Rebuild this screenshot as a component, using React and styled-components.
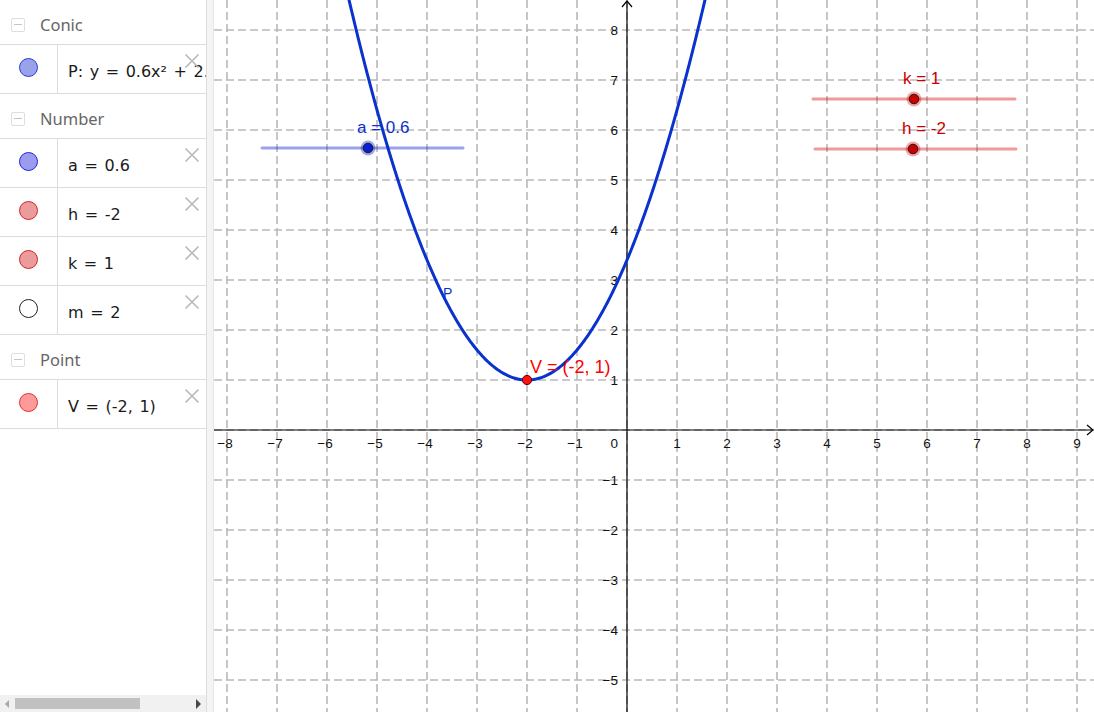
import React from 'react';
import styled, { createGlobalStyle } from 'styled-components';

const GlobalStyle = createGlobalStyle`
  html, body {
    margin: 0;
    padding: 0;
    width: 100%;
    height: 100%;
    overflow: hidden;
    background: #ffffff;
  }
  #root { height: 100%; }
`;

const Page = styled.div`
  display: flex;
  width: 1094px;
  height: 712px;
  font-family: "Noto Sans", "DejaVu Sans", sans-serif;
  background: #fff;
`;

/* ---------- Algebra view ---------- */

const AlgebraPanel = styled.aside`
  width: 206px;
  flex: none;
  border-right: 1px solid #dcdcdc;
  display: flex;
  flex-direction: column;
  background: #fff;
`;

const List = styled.div`
  flex: 1;
  overflow: hidden;
`;

const GroupHeader = styled.div`
  box-sizing: border-box;
  height: 45px;
  padding: 5px 0 0 11px;
  border-bottom: 1px solid #dcdcdc;
  display: flex;
  align-items: center;
  gap: 15px;
  color: #666;
  font-size: 16.5px;
`;

const Toggle = styled.span`
  box-sizing: border-box;
  width: 14px;
  height: 14px;
  border: 1px solid #dedede;
  border-radius: 2px;
  display: flex;
  align-items: center;
  justify-content: center;
  &::after {
    content: "";
    width: 8px;
    height: 1px;
    background: #c4c4c4;
  }
`;

const Row = styled.div`
  position: relative;
  box-sizing: border-box;
  height: 49px;
  border-bottom: 1px solid #dcdcdc;
  display: flex;
`;

const MarbleCell = styled.div`
  box-sizing: border-box;
  width: 58px;
  flex: none;
  border-right: 1px solid #dcdcdc;
  display: flex;
  justify-content: center;
  align-items: flex-start;
  padding-top: 13px;
`;

const Marble = styled.span`
  box-sizing: border-box;
  width: 19px;
  height: 19px;
  border-radius: 50%;
  background: ${p => p.$fill};
  border: 1.3px solid ${p => p.$stroke};
`;

const Formula = styled.div`
  padding: 17px 0 0 10px;
  line-height: 20px;
  font-family: "DejaVu Sans", sans-serif;
  font-size: 16px;
  word-spacing: 1.5px;
  color: #1a1a1a;
  white-space: nowrap;
  overflow: hidden;
  flex: 1;
`;

const CloseButton = styled.svg`
  position: absolute;
  top: 8px;
  right: 6px;
  width: 16px;
  height: 16px;
`;

const ScrollBar = styled.div`
  height: 17px;
  flex: none;
  background: #f1f1f1;
  display: flex;
  align-items: center;
  padding: 0 5px;
`;

const ArrowLeft = styled.span`
  width: 0;
  height: 0;
  border-top: 4px solid transparent;
  border-bottom: 4px solid transparent;
  border-right: 4px solid #a8a8a8;
  margin-right: 6px;
`;

const ArrowRight = styled.span`
  width: 0;
  height: 0;
  border-top: 5px solid transparent;
  border-bottom: 5px solid transparent;
  border-left: 5px solid #4a4a4a;
`;

const Thumb = styled.span`
  width: 125px;
  height: 11px;
  background: #c1c1c1;
`;

const Track = styled.span`
  flex: 1;
`;

const Splitter = styled.div`
  width: 6px;
  flex: none;
  background: #f4f4f4;
  border-right: 1px solid #e6e6e6;
`;

/* ---------- Graphics view ---------- */

const GraphView = styled.div`
  flex: 1;
  position: relative;
  overflow: hidden;
  background: #fff;
`;

const Canvas = styled.svg`
  display: block;
`;

const AxisLabel = styled.text`
  font-family: "Liberation Sans", Arial, sans-serif;
  font-size: 13.5px;
  fill: #111;
`;

const ObjectLabel = styled.text`
  font-family: "Liberation Sans", Arial, sans-serif;
  font-size: ${p => p.$size || 17}px;
  fill: ${p => p.$color};
`;

const W = 880;
const H = 712;
const OX = 413;
const OY = 430;
const S = 50;
const px = x => OX + S * x;
const py = y => OY - S * y;

const MINUS = '\u2212';

const groups = [
  {
    title: 'Conic',
    items: [{ text: 'P: y = 0.6x² + 2.4x + 3.4', fill: '#9aa3ea', stroke: '#2a3ad8' }],
  },
  {
    title: 'Number',
    items: [
      { text: 'a = 0.6', fill: '#9c9cee', stroke: '#2222e0' },
      { text: 'h = -2', fill: '#eb9b9b', stroke: '#d42424' },
      { text: 'k = 1', fill: '#eb9b9b', stroke: '#d42424' },
      { text: 'm = 2', fill: '#ffffff', stroke: '#222222' },
    ],
  },
  {
    title: 'Point',
    items: [{ text: 'V = (-2, 1)', fill: '#ff9a9a', stroke: '#e03030' }],
  },
];

function CloseIcon() {
  return (
    <CloseButton viewBox="0 0 16 16">
      <path d="M1.5 1.5 L14.5 14.5 M14.5 1.5 L1.5 14.5" stroke="#b8b8b8" strokeWidth="1.6" fill="none" />
    </CloseButton>
  );
}

function Algebra() {
  return (
    <AlgebraPanel>
      <List>
        {groups.map(g => (
          <React.Fragment key={g.title}>
            <GroupHeader>
              <Toggle />
              {g.title}
            </GroupHeader>
            {g.items.map(it => (
              <Row key={it.text}>
                <MarbleCell>
                  <Marble $fill={it.fill} $stroke={it.stroke} />
                </MarbleCell>
                <Formula>{it.text}</Formula>
                <CloseIcon />
              </Row>
            ))}
          </React.Fragment>
        ))}
      </List>
      <ScrollBar>
        <ArrowLeft />
        <Thumb />
        <Track />
        <ArrowRight />
      </ScrollBar>
    </AlgebraPanel>
  );
}

function parabolaPath() {
  const pts = [];
  for (let x = -5.7; x <= 1.7001; x += 0.02) {
    const y = 0.6 * (x + 2) * (x + 2) + 1;
    pts.push(`${px(x).toFixed(2)},${py(y).toFixed(2)}`);
  }
  return 'M' + pts.join(' L');
}

function Slider({ x1, x2, y, pos, color, lineColor, halo, label, labelColor }) {
  return (
    <g>
      <line x1={x1} y1={y} x2={x2} y2={y} stroke={lineColor} strokeWidth="3" strokeLinecap="round" />
      <circle cx={pos} cy={y} r="7.5" fill={halo} />
      <circle cx={pos} cy={y} r="4.8" fill={color} stroke="#1a1a1a" strokeWidth="1" />
      <ObjectLabel x={pos - 11} y={y - 15} $color={labelColor}>{label}</ObjectLabel>
    </g>
  );
}

function Graph() {
  const vx = [];
  for (let i = -8; i <= 9; i++) vx.push(i);
  const hy = [];
  for (let j = -5; j <= 8; j++) hy.push(j);

  return (
    <GraphView>
      <Canvas width={W} height={H} viewBox={`0 0 ${W} ${H}`}>
        <g stroke="#b9b9b9" strokeWidth="1.6" strokeDasharray="8 4">
          {vx.map(i => (
            <line key={'v' + i} x1={px(i)} y1={0} x2={px(i)} y2={H} />
          ))}
          {hy.map(j => (
            <line key={'h' + j} x1={0} y1={py(j)} x2={W} y2={py(j)} />
          ))}
        </g>

        <g stroke="#000" strokeWidth="1.2" fill="none">
          <line x1={0} y1={OY} x2={W - 1} y2={OY} />
          <polyline points={`${W - 7},${OY - 5} ${W - 1},${OY} ${W - 7},${OY + 5}`} />
          <line x1={OX} y1={1} x2={OX} y2={H} />
          <polyline points={`${OX - 5},${7} ${OX},${1} ${OX + 5},${7}`} />
        </g>

        {vx.filter(i => i !== 0).map(i => (
          <AxisLabel key={'lx' + i} x={px(i) - (i < 0 ? 2 : 0)} y={448} textAnchor="middle">
            {i < 0 ? MINUS + Math.abs(i) : String(i)}
          </AxisLabel>
        ))}
        <AxisLabel x={404} y={448} textAnchor="end">0</AxisLabel>
        {hy.filter(j => j !== 0).map(j => (
          <AxisLabel key={'ly' + j} x={404} y={py(j) + 5} textAnchor="end">
            {j < 0 ? MINUS + Math.abs(j) : String(j)}
          </AxisLabel>
        ))}

        <path d={parabolaPath()} stroke="#0a32cc" strokeWidth="3" fill="none" strokeLinejoin="round" />
        <ObjectLabel x={229} y={298} $size={14} $color="#0a32cc">P</ObjectLabel>

        <Slider
          x1={48} x2={249} y={148} pos={154}
          color="#0a1fd0" lineColor="rgba(20,30,210,0.42)" halo="rgba(20,40,210,0.4)"
          label="a = 0.6" labelColor="#0a2fcc"
        />
        <Slider
          x1={599} x2={801} y={99} pos={700}
          color="#cc0000" lineColor="rgba(220,0,0,0.4)" halo="rgba(220,0,0,0.35)"
          label="k = 1" labelColor="#cc0000"
        />
        <Slider
          x1={601} x2={802} y={149} pos={699}
          color="#cc0000" lineColor="rgba(220,0,0,0.4)" halo="rgba(220,0,0,0.35)"
          label="h = -2" labelColor="#cc0000"
        />

        <circle cx={px(-2)} cy={py(1)} r="4.6" fill="#ff1010" stroke="#5a0000" strokeWidth="1" />
        <ObjectLabel x={316} y={373} $size={18} $color="#ff0000">V = (-2, 1)</ObjectLabel>
      </Canvas>
    </GraphView>
  );
}

export default function App() {
  return (
    <>
      <GlobalStyle />
      <Page>
        <Algebra />
        <Splitter />
        <Graph />
      </Page>
    </>
  );
}
